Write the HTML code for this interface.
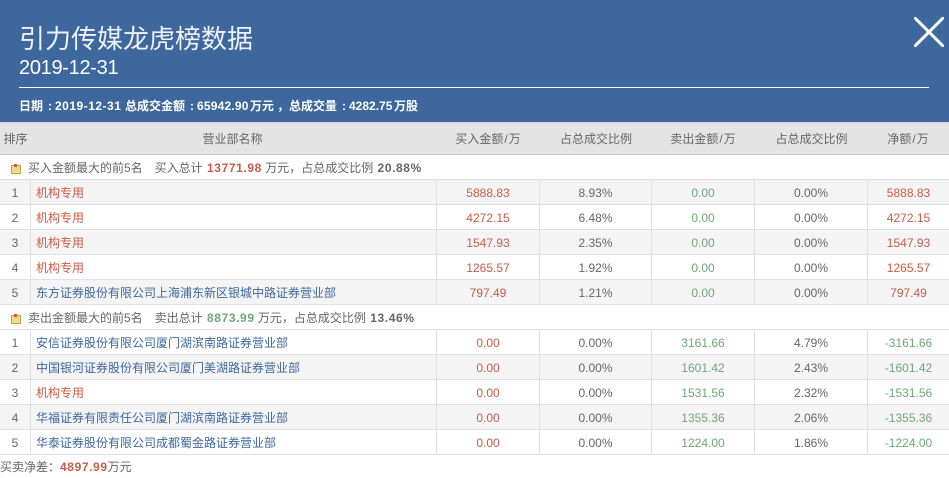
<!DOCTYPE html>
<html lang="zh"><head><meta charset="utf-8"><style>
*{box-sizing:border-box}
html,body{margin:0;padding:0;background:#fff}
body{width:949px;height:478px;overflow:hidden;position:relative;font-family:"Liberation Sans","Noto Sans CJK SC",sans-serif;font-size:12px;color:#666}
.hd{position:absolute;left:0;top:0;width:949px;height:122px;background:#3e689d;color:#fff}
.t{position:absolute;left:19px;top:20px;font-size:26px;line-height:38px;white-space:nowrap;color:#eef3f9}
.d{position:absolute;left:19px;top:55px;font-size:20px;line-height:26px;white-space:nowrap;letter-spacing:-.3px}
.l{position:absolute;left:19px;top:87px;width:910px;height:1px;background:#fff}
.i span{position:absolute;top:97px;font-size:12px;line-height:18px;font-weight:bold;white-space:nowrap}
.x{position:absolute;left:914px;top:17px}
table{position:absolute;left:0;top:122px;width:949px;border-collapse:separate;border-spacing:0;table-layout:fixed}
th,td{padding:2px 0 0;text-align:center;font-weight:normal;height:25px;line-height:22px;border-bottom:1px solid #e0e0e0;border-right:1px solid #e0e0e0;white-space:nowrap;overflow:hidden}
th{height:33px;line-height:29px;background:#e4e4e4;border-right:0;border-bottom:1px solid #c8c8c8;border-top:1px solid #d4d4d4}
th i{font-style:normal;padding:0 1px}
th.sl{padding-right:1px}
td:last-child{border-right:0}
td.n{text-align:left;padding-left:5px}
tr.g td{background:#f4f4f4}
td.s{text-align:left;padding-left:28px;border-right:0;position:relative}
td.s svg{position:absolute;left:11px;top:9px}
.r{color:#ca5b47}.g2{color:#6ea877}.b{color:#3e689d}
b{font-weight:bold;letter-spacing:.6px}
td.s b{margin-left:1px}
.f{position:absolute;left:0;top:458px;line-height:18px;white-space:nowrap}
</style></head><body>
<div class="hd">
<div class="t">引力传媒龙虎榜数据</div>
<div class="d">2019-12-31</div>
<div class="l"></div>
<div class="i"><span style="left:19px">日期</span><span style="left:48px">:</span><span style="left:55px;letter-spacing:.5px">2019-12-31</span><span style="left:125px">总成交金额</span><span style="left:190px">:</span><span style="left:197px;letter-spacing:.2px">65942.90</span><span style="left:250px">万元</span><span style="left:277px">，</span><span style="left:289px">总成交量</span><span style="left:342px">:</span><span style="left:349px">4282.75</span><span style="left:394px">万股</span></div>
<svg class="x" width="30" height="30" viewBox="0 0 30 30"><path d="M0 0L30 30M30 0L0 30" stroke="#fff" stroke-width="3" fill="none"/></svg>
</div>
<table>
<colgroup><col style="width:31px"><col style="width:406px"><col style="width:103px"><col style="width:112px"><col style="width:103px"><col style="width:113px"><col style="width:81px"></colgroup>
<tr><th>排序</th><th style="padding-right:3px">营业部名称</th><th class="sl">买入金额<i>/</i>万</th><th>占总成交比例</th><th class="sl">卖出金额<i>/</i>万</th><th>占总成交比例</th><th class="sl">净额<i>/</i>万</th></tr>
<tr><td class="s" colspan="7"><svg width="10" height="10" viewBox="0 0 10 10"><rect x=".5" y="1.5" width="9" height="8" fill="#f1dc7d" stroke="#b9a65a"/><rect x="3" y="0" width="3" height="3" fill="#d9534f"/></svg>买入金额最大的前5名　买入总计 <b class="r">13771.98</b> 万元，占总成交比例 <b>20.88%</b></td></tr>
<tr class="g"><td>1</td><td class="n r">机构专用</td><td class="r">5888.83</td><td>8.93%</td><td class="g2">0.00</td><td>0.00%</td><td class="r">5888.83</td></tr>
<tr><td>2</td><td class="n r">机构专用</td><td class="r">4272.15</td><td>6.48%</td><td class="g2">0.00</td><td>0.00%</td><td class="r">4272.15</td></tr>
<tr class="g"><td>3</td><td class="n r">机构专用</td><td class="r">1547.93</td><td>2.35%</td><td class="g2">0.00</td><td>0.00%</td><td class="r">1547.93</td></tr>
<tr><td>4</td><td class="n r">机构专用</td><td class="r">1265.57</td><td>1.92%</td><td class="g2">0.00</td><td>0.00%</td><td class="r">1265.57</td></tr>
<tr class="g"><td>5</td><td class="n b">东方证券股份有限公司上海浦东新区银城中路证券营业部</td><td class="r">797.49</td><td>1.21%</td><td class="g2">0.00</td><td>0.00%</td><td class="r">797.49</td></tr>
<tr><td class="s" colspan="7"><svg width="10" height="10" viewBox="0 0 10 10"><rect x=".5" y="1.5" width="9" height="8" fill="#f1dc7d" stroke="#b9a65a"/><rect x="3" y="0" width="3" height="3" fill="#d9534f"/></svg>卖出金额最大的前5名　卖出总计 <b class="g2">8873.99</b> 万元，占总成交比例 <b>13.46%</b></td></tr>
<tr><td>1</td><td class="n b">安信证券股份有限公司厦门湖滨南路证券营业部</td><td class="r">0.00</td><td>0.00%</td><td class="g2">3161.66</td><td>4.79%</td><td class="g2">-3161.66</td></tr>
<tr class="g"><td>2</td><td class="n b">中国银河证券股份有限公司厦门美湖路证券营业部</td><td class="r">0.00</td><td>0.00%</td><td class="g2">1601.42</td><td>2.43%</td><td class="g2">-1601.42</td></tr>
<tr><td>3</td><td class="n r">机构专用</td><td class="r">0.00</td><td>0.00%</td><td class="g2">1531.56</td><td>2.32%</td><td class="g2">-1531.56</td></tr>
<tr class="g"><td>4</td><td class="n b">华福证券有限责任公司厦门湖滨南路证券营业部</td><td class="r">0.00</td><td>0.00%</td><td class="g2">1355.36</td><td>2.06%</td><td class="g2">-1355.36</td></tr>
<tr><td>5</td><td class="n b">华泰证券股份有限公司成都蜀金路证券营业部</td><td class="r">0.00</td><td>0.00%</td><td class="g2">1224.00</td><td>1.86%</td><td class="g2">-1224.00</td></tr>
</table>
<div class="f">买卖净差：<b class="r">4897.99</b>万元</div>
</body></html>
